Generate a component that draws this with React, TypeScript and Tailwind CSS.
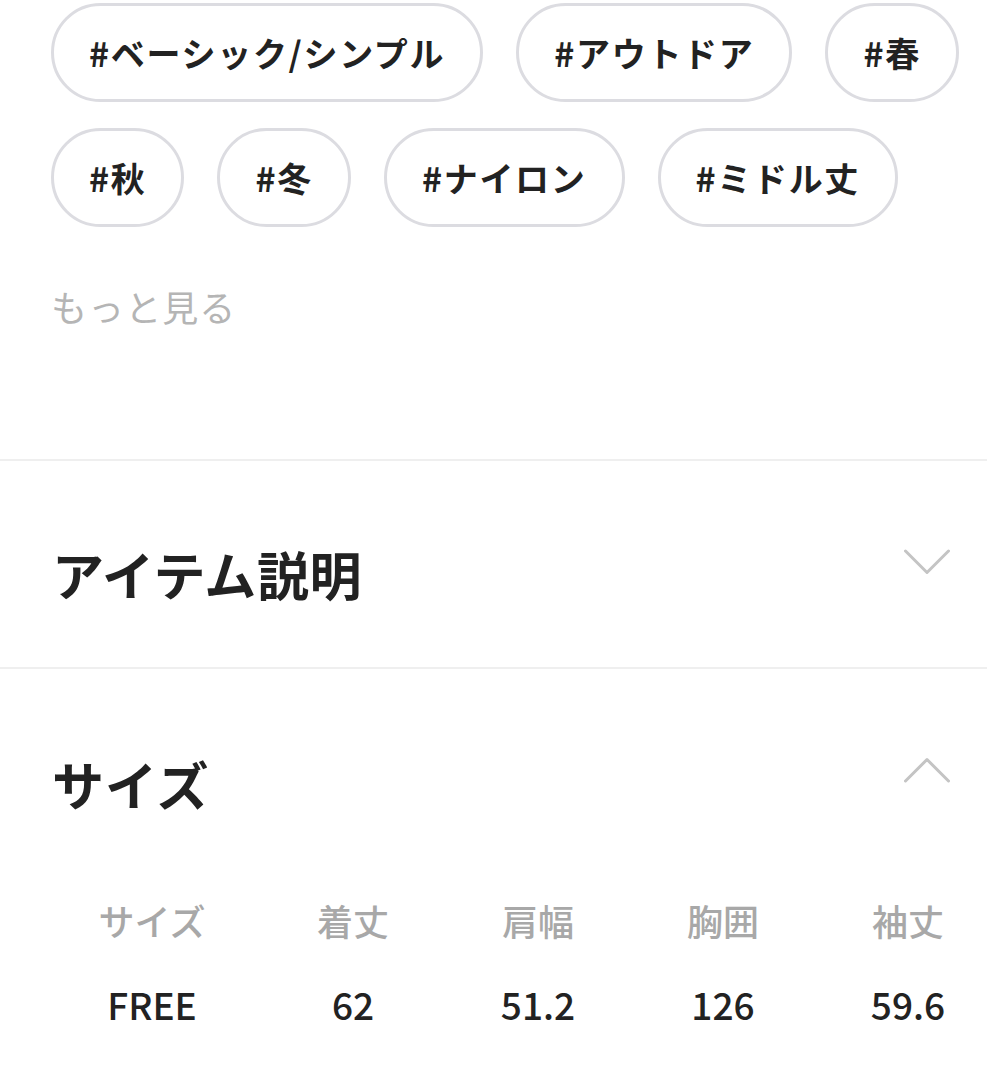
import React from 'react';

const tags = ['#ベーシック/シンプル', '#アウトドア', '#春', '#秋', '#冬', '#ナイロン', '#ミドル丈'];

const sizeHeaders = ['サイズ', '着丈', '肩幅', '胸囲', '袖丈'];
const sizeValues = ['FREE', '62', '51.2', '126', '59.6'];

const font = { fontFamily: '"Noto Sans CJK JP", "Noto Sans", sans-serif' };

function Chevron({ up }: { up?: boolean }) {
  return (
    <svg width="46" height="26" viewBox="0 0 46 26" fill="none" className="shrink-0">
      <polyline
        points={up ? '1.5,24 23,2.5 44.5,24' : '1.5,2 23,23.5 44.5,2'}
        stroke="#c4c4c4"
        strokeWidth="3"
        strokeLinecap="round"
        strokeLinejoin="round"
      />
    </svg>
  );
}

export default function App() {
  return (
    <div className="w-[987px] h-[1080px] overflow-hidden bg-white text-[#222222]" style={font}>
      {/* tags */}
      <div className="pl-[51px] pt-[3px]">
        <div className="flex flex-wrap gap-x-[33px] gap-y-[26px]">
          {tags.map(tag => (
            <div
              key={tag}
              className="h-[99px] px-[35px] flex items-center rounded-full border-[3px] border-[#dcdce1] text-[34px] font-bold leading-none tracking-[0.05em]"
            >
              {tag}
            </div>
          ))}
        </div>
        <div className="mt-[61px] text-[36px] leading-none tracking-[0.03em] text-[#b5b5b5]">もっと見る</div>
      </div>

      <div className="mt-[135px] h-[2px] bg-[#efefef]" />

      {/* item description */}
      <div className="pl-[52px] pr-[37px] pt-[87px] pb-[67px] flex items-start justify-between">
        <h2 className="text-[52px] font-bold leading-none tracking-[0.01em]">アイテム説明</h2>
        <div className="mt-[1px]">
          <Chevron />
        </div>
      </div>

      <div className="h-[2px] bg-[#efefef]" />

      {/* size */}
      <div className="pl-[52px] pr-[37px] pt-[89px] flex items-start justify-between">
        <h2 className="text-[52px] font-bold leading-none tracking-[0.02em]">サイズ</h2>
        <div className="-mt-[1px]">
          <Chevron up />
        </div>
      </div>

      <div className="mt-[92px] pl-[77px] flex gap-[35px]">
        {sizeHeaders.map((h, i) => (
          <div
            key={h}
            className={`w-[150px] text-center text-[36px] font-medium leading-none text-[#a8a8a8] ${i === 0 ? 'mr-[16px]' : ''}`}
          >
            {h}
          </div>
        ))}
      </div>
      <div className="mt-[48px] pl-[77px] flex gap-[35px]">
        {sizeValues.map((v, i) => (
          <div
            key={v}
            className={`w-[150px] text-center text-[37px] font-medium leading-none ${i === 0 ? 'mr-[16px]' : ''}`}
          >
            {v}
          </div>
        ))}
      </div>
    </div>
  );
}
